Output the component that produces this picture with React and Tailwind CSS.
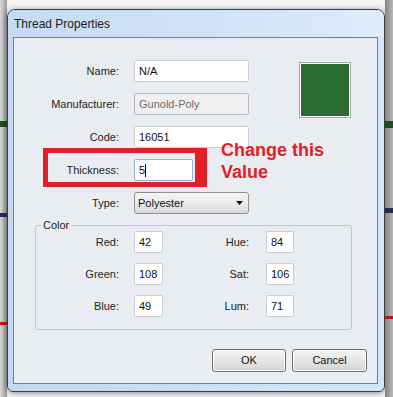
import React from 'react';

// strips of the picture behind the dialog, only visible in the gutters
const Gutter = ({ lines, className }) => (
  <div className={`flex flex-col shrink-0 ${className}`}>
    {lines.map((l, i) => (
      <div key={i} className={`w-full ${l.cls}`} />
    ))}
  </div>
);

const TextBox = ({ children, className = '', disabled, focused }) => {
  const base = disabled
    ? 'bg-[#f0f0f0] border-[#b5b9bf] text-[#6d6d6d]'
    : focused
    ? 'bg-white border-[#8fb4df] text-[#111]'
    : 'bg-white border-[#c9cdd3] text-[#111]';
  return (
    <div className={`h-[22px] border rounded-[2px] flex items-center pl-[4px] ${base} ${className}`}>
      {children}
    </div>
  );
};

const Row = ({ label, children }) => (
  <div className="flex items-center h-[22px]">
    <span className="w-[105px] text-right text-[#1e1e1e]">{label}</span>
    <div className="ml-[15px]">{children}</div>
  </div>
);

const ColorRow = ({ l1, v1, l2, v2 }) => (
  <div className="flex items-center h-[22px]">
    <span className="w-[83px] text-right text-[#1e1e1e]">{l1}</span>
    <TextBox className="ml-[15px] w-[29px]">{v1}</TextBox>
    <span className="w-[86px] text-right text-[#1e1e1e]">{l2}</span>
    <TextBox className="ml-[17px] w-[28px]">{v2}</TextBox>
  </div>
);

const Button = ({ children, className = '' }) => (
  <button className={`h-[23px] rounded-[3px] border border-[#707070] bg-gradient-to-b from-[#f4f4f4] via-[#e6e6e6] to-[#d2d2d2] text-[#111] shadow-[inset_0_0_0_1px_#fbfbfb] ${className}`}>
    {children}
  </button>
);

export default function App() {
  return (
    <div className="w-[393px] h-[397px] flex overflow-hidden bg-[#f4f4f4] font-['Liberation_Sans',Arial,sans-serif] text-[11px]">
      <Gutter
        className="w-[7px] bg-gradient-to-r from-[#dadada] to-[#9a9a9a]"
        lines={[
          { cls: 'mt-[121px] h-[6px] bg-[#1f4d22]' },
          { cls: 'mt-[86px] h-[4px] bg-[#1f2c5c]' },
          { cls: 'mt-[105px] h-[3px] bg-[#c4121c]' },
        ]}
      />

      {/* window */}
      <div className="w-[378px] h-[383px] mt-[9px] shrink-0 flex flex-col rounded-t-[8px] rounded-b-[6px] border border-[#3b3b3b] bg-gradient-to-r from-[#c3d9f0] to-[#d3e5f8] shadow-[0_1px_6px_rgba(0,0,0,0.45)]">
        <div className="h-[27px] flex items-center pl-[6px] text-[12px] text-[#1b1b1b] rounded-t-[7px] bg-gradient-to-r from-[#c6dbf2] via-[#cfe2f6] to-[#deecfa]">
          Thread Properties
        </div>

        <div className="relative ml-[5px] mr-[6px] h-[347px] border border-[#6f7e91] bg-[#e9ecf0] flex flex-col">
          <div className="flex pt-[22px]">
            <div className="flex flex-col gap-[11px] w-[235px]">
              <Row label="Name:">
                <TextBox className="w-[115px]">N/A</TextBox>
              </Row>
              <Row label="Manufacturer:">
                <TextBox className="w-[115px]" disabled>Gunold-Poly</TextBox>
              </Row>
              <Row label="Code:">
                <TextBox className="w-[115px]">16051</TextBox>
              </Row>
              <Row label="Thickness:">
                <TextBox className="w-[59px]" focused>
                  5<span className="w-[1px] h-[13px] bg-black" />
                </TextBox>
              </Row>
              <Row label="Type:">
                <div className="w-[115px] h-[22px] rounded-[3px] border border-[#8e8f8f] bg-gradient-to-b from-[#f5f5f5] via-[#ebebeb] to-[#d9d9d9] flex items-center justify-between pl-[3px] pr-[5px] text-[#111]">
                  <span>Polyester</span>
                  <svg width="7" height="4" viewBox="0 0 7 4">
                    <path d="M0 0h7L3.5 4z" fill="#111" />
                  </svg>
                </div>
              </Row>
            </div>
            <div className="ml-[50px] mt-[2px] w-[52px] h-[56px] border border-[#a9a9a9] bg-[#2a6c31] shadow-[inset_0_0_0_1px_#ffffff]" />
          </div>

          <fieldset className="ml-[21px] mt-[5px] w-[317px] border border-[#c3c8d0] rounded-[3px] pb-[12px]">
            <legend className="ml-[5px] px-[2px] leading-[12px] text-[#1e1e1e]">Color</legend>
            <div className="flex flex-col gap-[10px]">
              <ColorRow l1="Red:" v1="42" l2="Hue:" v2="84" />
              <ColorRow l1="Green:" v1="108" l2="Sat:" v2="106" />
              <ColorRow l1="Blue:" v1="49" l2="Lum:" v2="71" />
            </div>
          </fieldset>

          <div className="flex justify-end gap-[6px] pr-[10px] mt-[19px]">
            <Button className="w-[74px]">OK</Button>
            <Button className="w-[75px]">Cancel</Button>
          </div>

          {/* annotation over the dialog */}
          <div className="absolute left-[29px] top-[110px] w-[164px] h-[39px] border-[5px] border-r-[12px] border-[#e3202a]" />
          <div className="absolute left-[207px] top-[101px] text-[18px] leading-[22px] font-bold text-[#e3202a]">
            Change this
            <br />
            Value
          </div>
        </div>
        <div className="h-[7px]" />
      </div>

      <Gutter
        className="w-[8px] bg-gradient-to-r from-[#858585] to-[#b8b8b8]"
        lines={[
          { cls: 'mt-[121px] h-[7px] bg-[#1f4d22]' },
          { cls: 'mt-[80px] h-[5px] bg-[#1f2c5c]' },
          { cls: 'mt-[103px] h-[3px] bg-[#c4121c]' },
        ]}
      />
    </div>
  );
}
